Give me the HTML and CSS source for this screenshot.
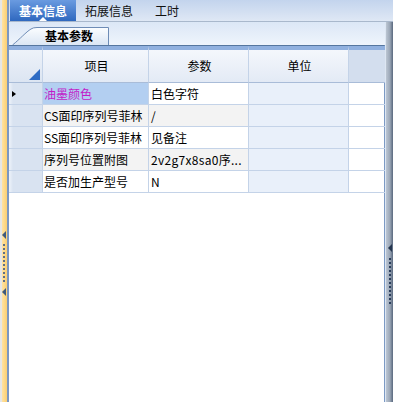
FILE: index.html
```html
<!DOCTYPE html>
<html lang="zh-CN">
<head>
    <meta charset="UTF-8">
    <title>基本信息</title>
    <link rel="stylesheet" href="styles.css">
</head>
<body>
<div class="frame">
    <!-- 左侧折叠条 -->
    <div class="leftbar">
        <span class="grip-arrow"></span>
        <span class="grip-dots"></span>
        <span class="grip-arrow"></span>
    </div>
    <div class="main">
        <div class="tabbar">
            <div class="tab active">基本信息</div>
            <div class="tab">拓展信息</div>
            <div class="tab tab-last">工时</div>
        </div>
        <div class="content">
            <div class="panel">
                <div class="subtabs">
                    <div class="subtab">
                        <svg class="subtab-bg" width="97" height="18" viewBox="0 0 97 18">
                            <defs>
                                <linearGradient id="tabFill" x1="0" y1="0" x2="0" y2="1">
                                    <stop offset="0" stop-color="#fbfdff"/>
                                    <stop offset="1" stop-color="#dbe6f4"/>
                                </linearGradient>
                            </defs>
                            <path d="M0.5 18 C 8 12 14 5 19 2 Q 21 0.5 25 0.5 H 96.5 V 18" fill="url(#tabFill)" stroke="#6e8cb6"/>
                        </svg>
                        <span class="subtab-text">基本参数</span>
                    </div>
                </div>
                <div class="grid">
                    <div class="cell corner"><span class="corner-mark"></span></div>
                    <div class="cell head">项目</div>
                    <div class="cell head">参数</div>
                    <div class="cell head">单位</div>
                    <div class="cell head filler"></div>

                    <div class="cell rowhead"><span class="row-arrow"></span></div>
                    <div class="cell name selected">油墨颜色</div>
                    <div class="cell">白色字符</div>
                    <div class="cell unit"></div>
                    <div class="cell blank"></div>

                    <div class="cell rowhead"></div>
                    <div class="cell name alt">CS面印序列号菲林</div>
                    <div class="cell alt">/</div>
                    <div class="cell unit"></div>
                    <div class="cell blank"></div>

                    <div class="cell rowhead"></div>
                    <div class="cell name">SS面印序列号菲林</div>
                    <div class="cell">见备注</div>
                    <div class="cell unit"></div>
                    <div class="cell blank"></div>

                    <div class="cell rowhead"></div>
                    <div class="cell name alt">序列号位置附图</div>
                    <div class="cell alt mono">2v2g7x8sa0序...</div>
                    <div class="cell unit"></div>
                    <div class="cell blank"></div>

                    <div class="cell rowhead"></div>
                    <div class="cell name">是否加生产型号</div>
                    <div class="cell mono">N</div>
                    <div class="cell unit"></div>
                    <div class="cell blank"></div>
                </div>
            </div>
            <!-- 右侧分隔条 -->
            <div class="rightbar">
                <span class="grip-arrow dark"></span>
                <span class="grip-dots dark"></span>
            </div>
        </div>
    </div>
</div>
</body>
</html>
```

FILE: styles.css
```css
*{
    box-sizing: border-box;
}
body{
    margin: 0;
    width: 393px;
    height: 402px;
    overflow: hidden;
    background: #fff;
    font: 12px "Noto Sans CJK SC", "Liberation Sans", sans-serif;
    color: #000;
}
.frame{
    display: flex;
    height: 402px;
}
.leftbar{
    width: 9px;
    flex: none;
    display: flex;
    flex-direction: column;
    align-items: center;
    padding-top: 231px;
    background: linear-gradient(to right, #e6e6e6 0, #e6e6e6 2px, #ffe3a3 2px, #fbcf72 7px, #7b97c2 7px, #7b97c2 9px);
}
.leftbar .grip-arrow{
    margin-left: -2px;
}
.grip-arrow{
    width: 0;
    height: 0;
    border-top: 4px solid transparent;
    border-bottom: 4px solid transparent;
    border-right: 4px solid #3f5a7e;
}
.grip-dots{
    width: 2px;
    height: 38px;
    margin: 5px 0 6px -2px;
    background: repeating-linear-gradient(#5f6f86 0, #5f6f86 2px, transparent 2px, transparent 4px);
}
.main{
    flex: 1;
    display: flex;
    flex-direction: column;
}
.tabbar{
    height: 22px;
    display: flex;
    align-items: stretch;
    padding-left: 1px;
    background: linear-gradient(#c3d4ed, #dfe8f5);
    border-bottom: 1px solid #a9b8cc;
}
.tab{
    position: relative;
    padding: 0 9px;
    line-height: 21px;
    color: #111;
}
.tab.active{
    color: #fff;
    font-weight: bold;
    background: linear-gradient(#6a9be0, #2f68bf);
}
.tab.active::after{
    content: "";
    position: absolute;
    left: 29px;
    bottom: 0;
    border-left: 4px solid transparent;
    border-right: 4px solid transparent;
    border-bottom: 4px solid #fff;
}
.tab-last{
    margin-left: 4px;
}
.content{
    flex: 1;
    display: flex;
}
.panel{
    width: 376px;
    display: flex;
    flex-direction: column;
}
.subtabs{
    height: 23px;
    padding: 5px 0 0 3px;
    background: linear-gradient(#dce7f6, #eef4fc);
}
.subtab{
    position: relative;
    width: 97px;
    height: 18px;
    display: flex;
    align-items: center;
    padding-left: 33px;
}
.subtab-bg{
    position: absolute;
    left: 0;
    top: 0;
}
.subtab-text{
    position: relative;
    font-weight: bold;
    line-height: 18px;
}
.grid{
    flex: 1;
    display: grid;
    grid-template-columns: 34px 106px 100px 100px 36px;
    grid-template-rows: 37px;
    grid-auto-rows: 22px;
    align-content: start;
    border-top: 1px solid #55769f;
    border-right: 1px solid #7c9ac4;
    background: #fff;
}
.cell{
    border-right: 1px solid #c4d3e8;
    border-bottom: 1px solid #c4d3e8;
    line-height: 21px;
    padding-left: 2px;
    white-space: nowrap;
    overflow: hidden;
}
.head, .corner{
    border-top: 4px solid #90b0df;
    text-align: center;
    line-height: 32px;
    background: linear-gradient(#f4f7fc, #e3eaf5);
    border-bottom-color: #a9bcd8;
}
.head.filler{
    background: #d3deee;
    border-right: none;
}
.corner{
    position: relative;
    background: linear-gradient(#edf2f9, #dce5f2);
}
.corner-mark{
    position: absolute;
    right: 2px;
    bottom: 2px;
    width: 0;
    height: 0;
    border-left: 11px solid transparent;
    border-bottom: 11px solid #2f6cc4;
}
.rowhead{
    background: linear-gradient(to right, #eef3fa, #d9e3f1 4px);
    display: flex;
    align-items: center;
    padding-left: 3px;
}
.row-arrow{
    width: 0;
    height: 0;
    border-top: 3px solid transparent;
    border-bottom: 3px solid transparent;
    border-left: 4px solid #000;
}
.name{
    padding-left: 1px;
}
.selected{
    background: #b3cff1;
    color: #c21cc8;
}
.alt{
    background: #f3f3f3;
}
.unit{
    background: #e9f0fa;
}
.blank{
    border-right: none;
}
.mono{
    letter-spacing: 0.3px;
}
.rightbar{
    width: 8px;
    flex: none;
    display: flex;
    flex-direction: column;
    align-items: center;
    padding-top: 222px;
    background: linear-gradient(to right, #dde6f2 0, #dde6f2 1px, #bcc6d3 1px, #9aa6b6 5px, #6d7b8f 7px, #5b6a80 8px);
}
.grip-arrow.dark{
    border-right-color: #24364f;
    margin-left: 1px;
}
.grip-dots.dark{
    margin: 6px 0 0 1px;
    height: 46px;
    background: repeating-linear-gradient(#2c3f5c 0, #2c3f5c 2px, transparent 2px, transparent 4px);
}
```
